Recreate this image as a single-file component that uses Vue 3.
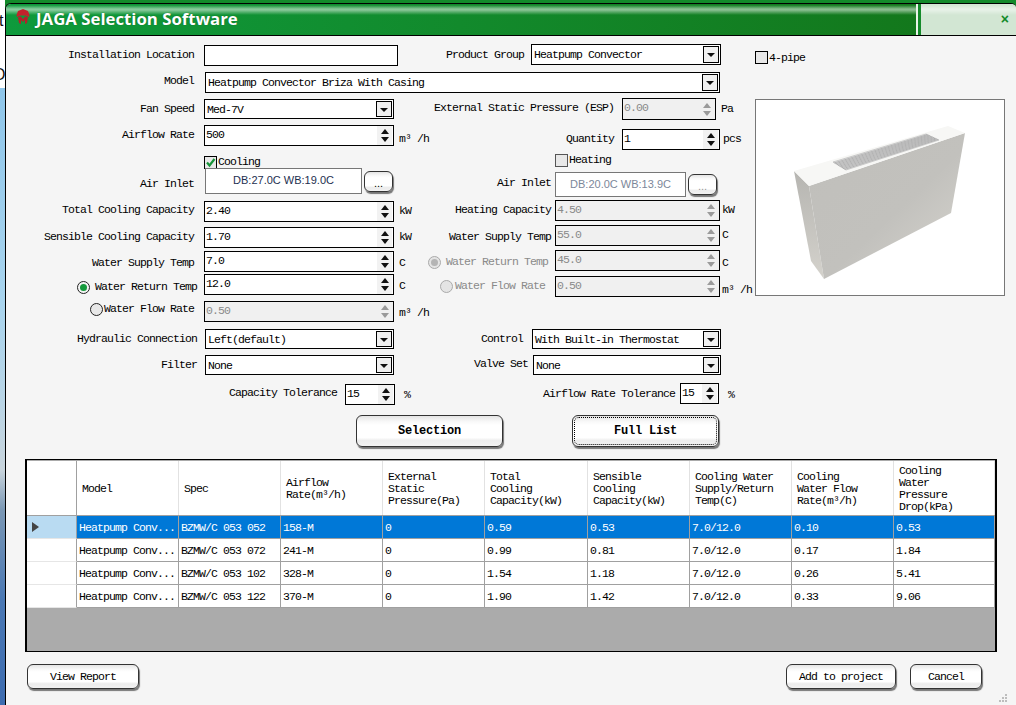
<script setup>
const headers = [
  ['Model'], ['Spec'], ['Airflow', 'Rate(m³/h)'], ['External', 'Static', 'Pressure(Pa)'],
  ['Total', 'Cooling', 'Capacity(kW)'], ['Sensible', 'Cooling', 'Capacity(kW)'],
  ['Cooling Water', 'Supply/Return', 'Temp(C)'], ['Cooling', 'Water Flow', 'Rate(m³/h)'],
  ['Cooling', 'Water', 'Pressure', 'Drop(kPa)']
]
const rows = [
  ['Heatpump Conv...', 'BZMW/C 053 052', '158-M', '0', '0.59', '0.53', '7.0/12.0', '0.10', '0.53'],
  ['Heatpump Conv...', 'BZMW/C 053 072', '241-M', '0', '0.99', '0.81', '7.0/12.0', '0.17', '1.84'],
  ['Heatpump Conv...', 'BZMW/C 053 102', '328-M', '0', '1.54', '1.18', '7.0/12.0', '0.26', '5.41'],
  ['Heatpump Conv...', 'BZMW/C 053 122', '370-M', '0', '1.90', '1.42', '7.0/12.0', '0.33', '9.06']
]
const grill = Array.from({ length: 9 }, (_, i) => i)
</script>

<template>
  <div class="screen">
    <div class="strip"><span class="frag t">t</span><span class="frag o">O</span></div>
    <div class="main">
      <div class="topline"></div>
      <div class="window">
        <header class="title">
          <div class="title-left">
            <svg class="logo" viewBox="0 0 14 16" width="14" height="16">
              <path d="M7 0 L12 2 L13.5 6 L13 8 L9.5 6.5 L4.500 6.500 L1 8 L.5 6 L2 2 Z" fill="#c3222c" />
              <path d="M2 8 L5 7.500 L7 10 L9 7.500 L12 8 L11 14 L9 15 L9 11 L7 13 L5 11 L5 15 L3 14 Z" fill="#b51f2a" />
            </svg>
            <span class="title-text">JAGA Selection Software</span>
          </div>
          <div class="title-sep"></div>
          <div class="title-right"><span class="close">×</span></div>
        </header>

        <div class="upper">
          <div class="fields">
            <div class="row h27">
              <span class="lab">Installation Location</span>
              <div class="input w194 h21"></div>
              <span class="lab pg">Product Group</span>
              <div class="sel w190 h21 up1">Heatpump Convector<span class="drop"></span></div>
            </div>
            <div class="row h27">
              <span class="lab lab-m">Model</span>
              <div class="sel w515 h21">Heatpump Convector Briza With Casing<span class="drop"></span></div>
            </div>

            <div class="cols">
              <div class="col-left">
                <div class="row" style="height:26px">
                  <span class="lab">Fan Speed</span>
                  <div class="sel w190 h20">Med-7V<span class="drop"></span></div>
                </div>
                <div class="row" style="height:30px">
                  <span class="lab">Airflow Rate</span>
                  <div class="input w190 h21">500<span class="spin"><i class="au"></i><i class="ad"></i></span></div>
                  <span class="unit d4">m³ /h</span>
                </div>
                <div class="row" style="height:13px">
                  <label class="chk-wrap cool"><span class="chk on"><svg viewBox="0 0 11 11" width="11" height="11"><path d="M2 5.500 L4.500 8.500 L9.500 2" fill="none" stroke="#18953a" stroke-width="2.200" /></svg></span>Cooling</label>
                </div>
                <div class="row" style="height:33px">
                  <span class="lab lab-inlet lab-s">Air Inlet</span>
                  <div class="inlet w157">DB:27.0C WB:19.0C</div>
                  <div class="btn dots">...</div>
                </div>
                <div class="row" style="height:26px">
                  <span class="lab m-1">Total Cooling Capacity</span>
                  <div class="input w190 h21">2.40<span class="spin"><i class="au"></i><i class="ad"></i></span></div>
                  <span class="unit">kW</span>
                </div>
                <div class="row" style="height:24px">
                  <span class="lab">Sensible Cooling Capacity</span>
                  <div class="input w190 h21">1.70<span class="spin"><i class="au"></i><i class="ad"></i></span></div>
                  <span class="unit">kW</span>
                </div>
                <div class="row" style="height:23px">
                  <span class="lab d2">Water Supply Temp</span>
                  <div class="input w190 h21">7.0<span class="spin"><i class="au"></i><i class="ad"></i></span></div>
                  <span class="unit d2">C</span>
                </div>
                <div class="row" style="height:27px">
                  <span class="lab lab-wr d3"><span class="radio on"></span>Water Return Temp</span>
                  <div class="input w190 h21">12.0<span class="spin"><i class="au"></i><i class="ad"></i></span></div>
                  <span class="unit d2">C</span>
                </div>
                <div class="row" style="height:28px">
                  <span class="lab lab-wf m-2"><span class="radio"></span>Water Flow Rate</span>
                  <div class="input w190 h21 off">0.50<span class="spin"><i class="au"></i><i class="ad"></i></span></div>
                  <span class="unit d2">m³ /h</span>
                </div>
              </div>

              <div class="col-right">
                <div class="row" style="height:31px">
                  <span class="lab2 wide">External Static Pressure (ESP)</span>
                  <div class="input off w94 h22">0.00<span class="spin"><i class="au"></i><i class="ad"></i></span></div>
                  <span class="unit d1">Pa</span>
                </div>
                <div class="row" style="height:24px">
                  <span class="lab2 wide">Quantity</span>
                  <div class="input w98 h21">1<span class="spin"><i class="au"></i><i class="ad"></i></span></div>
                  <span class="unit u3">pcs</span>
                </div>
                <div class="row" style="height:19px">
                  <label class="chk-wrap heat"><span class="chk dim"></span>Heating</label>
                </div>
                <div class="row" style="height:28px">
                  <span class="lab2 d1">Air Inlet</span>
                  <div class="inlet w131 h25 dimtext">DB:20.0C WB:13.9C</div>
                  <div class="btn dots dots-r dimtext">...</div>
                </div>
                <div class="row" style="height:25px">
                  <span class="lab2">Heating Capacity</span>
                  <div class="input off w165 h21">4.50<span class="spin"><i class="au"></i><i class="ad"></i></span></div>
                  <span class="unit u2">kW</span>
                </div>
                <div class="row" style="height:25px">
                  <span class="lab2 d2">Water Supply Temp</span>
                  <div class="input off w165 h21">55.0<span class="spin"><i class="au"></i><i class="ad"></i></span></div>
                  <span class="unit u2">C</span>
                </div>
                <div class="row" style="height:26px">
                  <span class="lab2 graylab lab-rr d2"><span class="radio on dis"></span>Water Return Temp</span>
                  <div class="input off w165 h21">45.0<span class="spin"><i class="au"></i><i class="ad"></i></span></div>
                  <span class="unit u2 d3">C</span>
                </div>
                <div class="row" style="height:21px">
                  <span class="lab2 graylab lab-rf"><span class="radio dis"></span>Water Flow Rate</span>
                  <div class="input off w165 h21">0.50<span class="spin"><i class="au"></i><i class="ad"></i></span></div>
                  <span class="unit u2 d4">m³ /h</span>
                </div>
              </div>
            </div>
          </div>

          <aside class="side">
            <label class="chk-wrap pipe"><span class="chk"></span>4-pipe</label>
            <div class="photo">
              <svg viewBox="755 99 248 195" width="248" height="195">
                <defs>
                  <linearGradient id="front" x1="0" y1="0" x2="1" y2="1">
                    <stop offset="0" stop-color="#c0bfbb" />
                    <stop offset=".55" stop-color="#c2c1bd" />
                    <stop offset="1" stop-color="#d8d6d0" />
                  </linearGradient>
                  <linearGradient id="sidef" x1="0" y1="0" x2="0" y2="1">
                    <stop offset="0" stop-color="#b6b5b1" />
                    <stop offset="1" stop-color="#d4d2cc" />
                  </linearGradient>
                </defs>
                <path d="M793 170 L808 185 L823 278 L810 260 Z" fill="url(#sidef)" />
                <path d="M808 185 L964 132 L950 212 L823 278 Z" fill="url(#front)" />
                <path d="M793 170 L947 125 L964 132 L808 185 Z" fill="#f7f7f5" />
                <path d="M832 161 L925 133 L938 139 L845 169 Z" fill="#ececec" stroke="#a0a0a0" stroke-width=".5" />
                <path v-for="i in grill" :key="i" :d="`M${833.300 + i * 1.300} ${161.900 + i * 0.800} L${926.300 + i * 1.300} ${133.700 + i * 0.600}`" stroke="#8c8c8c" stroke-width=".6" />
              </svg>
            </div>
          </aside>
        </div>

        <div class="lower">
          <div class="row" style="height:26px">
            <span class="lab lab-h">Hydraulic Connection</span>
            <div class="sel w189 h20">Left(default)<span class="drop"></span></div>
            <span class="lab ctl">Control</span>
            <div class="sel w189 h20">With Built-in Thermostat<span class="drop"></span></div>
          </div>
          <div class="row" style="height:29px">
            <span class="lab lab-h">Filter</span>
            <div class="sel w189 h20">None<span class="drop"></span></div>
            <span class="lab valve">Valve Set</span>
            <div class="sel w188 h20">None<span class="drop"></span></div>
          </div>
          <div class="row" style="height:31px">
            <span class="lab tol1">Capacity Tolerance</span>
            <div class="input w50 h21">15<span class="spin"><i class="au"></i><i class="ad"></i></span></div>
            <span class="unit pct">%</span>
            <span class="lab tol2">Airflow Rate Tolerance</span>
            <div class="input w39 h21 up1">15<span class="spin"><i class="au"></i><i class="ad"></i></span></div>
            <span class="unit pct">%</span>
          </div>
          <div class="actions">
            <div class="btn big">Selection</div>
            <div class="btn big focus"><span>Full List</span></div>
          </div>
        </div>

        <div class="grid">
          <div class="grid-head">
            <div class="corner"></div>
            <div v-for="(h, i) in headers" :key="i" class="hcell">
              <div><div v-for="l in h" :key="l">{{ l }}</div></div>
            </div>
          </div>
          <div v-for="(r, ri) in rows" :key="ri" class="grid-row" :class="{ selected: ri === 0 }">
            <div class="rowhead"><span v-if="ri === 0" class="pointer"></span></div>
            <div v-for="(c, ci) in r" :key="ci" class="cell">{{ c }}</div>
          </div>
        </div>

        <footer class="foot">
          <div class="btn small report">View Report</div>
          <div class="btn small add">Add to project</div>
          <div class="btn small cancel">Cancel</div>
        </footer>
        <div class="grip"><i></i><i></i><i></i><i></i><i></i><i></i></div>
      </div>
    </div>
  </div>
</template>

<style>
html, body { margin: 0; padding: 0; overflow: hidden; }
</style>

<style scoped>
.screen {
  width: 1016px; height: 705px; display: flex; overflow: hidden;
  font: 11.5px/12px "Liberation Mono", "DejaVu Sans Mono", monospace;
  letter-spacing: -.9px; color: #000;
}
.strip {
  width: 5px; flex: none; position: relative; overflow: hidden;
  background: linear-gradient(#fff 0, #fff 88px, #8fc6ea 88px, #a8d4ee 300px, #b9d5e6 400px, #c8d4dc 470px, #7a97b4 510px, #4a78b4 600px, #3d6cb0 705px);
}
.frag { position: absolute; font: 16px "Liberation Sans", sans-serif; color: #111; }
.frag.t { left: -1px; top: 12px; }
.frag.o { left: -7px; top: 66px; }
.main { flex: 1; display: flex; flex-direction: column; min-width: 0; background: #138a2a; }
.topline { height: 3px; flex: none; }
.window {
  flex: 1; position: relative; background: #f5f5f5; border-left: 1px solid #000; border-top: 1px solid #000;
  border-top-left-radius: 6px; border-top-right-radius: 5px; overflow: hidden;
}

.title { height: 31px; display: flex; border-bottom: 1px solid #000; }
.title-left {
  width: 910px; display: flex; align-items: center; padding-left: 9px; box-sizing: border-box; gap: 6px;
  background:
    linear-gradient(rgba(255,255,255,0) 1px, rgba(255,255,255,.5) 5px, rgba(255,255,255,.5) 6px, rgba(255,255,255,0) 11px),
    linear-gradient(90deg, #0e9a3c, #128a2c 50%, #13781c);
}
.logo { margin-top: -6px; margin-left: 1px; }
.title-text {
  font: 700 16.800px/20px "Open Sans", "Liberation Sans", sans-serif; letter-spacing: 0; color: #fff;
  margin-top: -1px; text-shadow: 0 0 1px #0b5a1e;
}
.title-sep { width: 5px; background: linear-gradient(90deg, #e8f2e8 0 2px, #148a2a 2px); }
.title-right {
  flex: 1; display: flex; align-items: center; justify-content: flex-end; padding-right: 7px;
  background:
    linear-gradient(rgba(255,255,255,0) 1px, rgba(255,255,255,.45) 5px, rgba(255,255,255,.45) 6px, rgba(255,255,255,0) 11px),
    #d2e6d3;
}
.close { font: 700 14px/14px "Liberation Sans", sans-serif; letter-spacing: 0; color: #138a2a; margin-top: -2px; }

.upper { display: flex; padding-top: 9px; }
.fields { width: 744px; flex: none; }
.side { flex: 1; padding-left: 5px; display: flex; flex-direction: column; }
.row { display: flex; align-items: flex-start; flex: none; }
.h27 { height: 27px; }
.cols { display: flex; }
.col-left { width: 418px; flex: none; }
.col-right { flex: 1; margin-top: -1px; }

.lab { width: 188px; margin-right: 10px; text-align: right; line-height: 20px; flex: none; white-space: nowrap; box-sizing: border-box; }
.lab-m { margin-right: 11px; margin-top: -1px; }
.lab-wr { width: 191px; margin-right: 7px; display: flex; justify-content: flex-end; align-items: center; gap: 5px; }
.lab-wf { display: flex; justify-content: flex-end; align-items: center; gap: 1px; }
.lab-inlet { margin-top: 6px; }
.lab-s { margin-right: 11px; }
.lab-h { width: 191px; margin-right: 8px; }
.pg { width: 126px; margin-right: 7px; }
.ctl { width: 129px; margin-right: 9px; }
.valve { width: 134px; margin-right: 5px; margin-top: -1px; }
.tol1 { width: 331px; margin-right: 8px; margin-top: -1px; }
.tol2 { width: 271px; margin-right: 5px; }
.m-1 { margin-top: -1px; }
.m-2 { margin-top: -2px; }
.d1 { margin-top: 1px; }
.d2 { margin-top: 2px; }
.d3 { margin-top: 3px; }
.d4 { margin-top: 4px; }

.lab2 { width: 127px; margin-right: 4px; text-align: right; line-height: 20px; flex: none; white-space: nowrap; }
.lab2.wide { width: 190px; margin-right: 8px; }
.graylab { color: #8a8a8a; display: flex; justify-content: flex-end; align-items: center; }
.lab-rr { width: 124px; margin-right: 7px; gap: 5px; }
.lab-rf { width: 121px; margin-right: 10px; gap: 2px; }

.input, .sel {
  position: relative; box-sizing: border-box; border: 1px solid #000; background: #fff; flex: none;
  padding-left: 1px; line-height: 17px; white-space: nowrap;
}
.sel { line-height: 19px; padding-left: 2px; }
.off { background: #f0f0f0; color: #8a8a8a; }
.up1 { margin-top: -1px; }
.w39 { width: 39px; } .w50 { width: 50px; } .w94 { width: 94px; } .w98 { width: 98px; }
.w131 { width: 131px; } .w157 { width: 157px; } .w165 { width: 165px; } .w188 { width: 188px; }
.w189 { width: 189px; } .w190 { width: 190px; } .w194 { width: 194px; } .w515 { width: 515px; }
.h20 { height: 20px; } .h21 { height: 21px; } .h22 { height: 22px; } .h25 { height: 25px !important; }

.spin {
  position: absolute; right: 1px; top: 0; bottom: 0; width: 15px; background: #f2f2f2;
  display: flex; flex-direction: column; align-items: center; justify-content: center; gap: 3px;
}
.off .spin { background: #f0f0f0; }
.au, .ad { display: block; width: 0; height: 0; border-left: 4px solid transparent; border-right: 4px solid transparent; }
.au { border-bottom: 5px solid #111; }
.ad { border-top: 5px solid #111; }
.off .au { border-bottom-color: #9a9a9a; }
.off .ad { border-top-color: #9a9a9a; }

.drop {
  position: absolute; right: 1px; top: 1px; bottom: 1px; width: 16px; box-sizing: border-box;
  border: 1px solid #000; background: #f0f0f0; display: flex; align-items: center; justify-content: center;
}
.drop::after {
  content: ""; width: 0; height: 0; border-left: 4px solid transparent; border-right: 4px solid transparent;
  border-top: 4px solid #111; margin-top: 1px;
}

.unit { margin-left: 5px; line-height: 20px; white-space: nowrap; }
.u2 { margin-left: 2px; }
.u3 { margin-left: 3px; }
.pct { margin-left: 9px; margin-top: 1px; width: 0; }

.chk-wrap { display: flex; align-items: center; gap: 1px; line-height: 14px; white-space: nowrap; }
.cool { margin-left: 198px; }
.heat { margin-left: 131px; }
.pipe { margin-top: 6px; height: 13px; }
.chk {
  width: 13px; height: 13px; box-sizing: border-box; border: 1px solid #000; background: #e8e8e8; flex: none;
  display: flex; align-items: center; justify-content: center;
}
.chk.dim { border-color: #555; }
.chk svg { display: block; }

.radio {
  width: 13px; height: 13px; box-sizing: border-box; border: 1px solid #222; border-radius: 50%; background: #e8e8e8;
  flex: none; display: flex; align-items: center; justify-content: center;
}
.radio.on { background: #f4f4f4; }
.radio.on::after { content: ""; width: 7px; height: 7px; border-radius: 50%; background: #159a3c; }
.radio.dis { border-color: #aaa; background: #e4e4e4; }
.radio.on.dis::after { background: #b4b4b4; }

.inlet {
  height: 26px; box-sizing: border-box; border: 1px solid #777; background: #fff; flex: none;
  font: 11px/23px "Liberation Sans", sans-serif; letter-spacing: 0; color: #1d2f4f; text-align: center;
}
.dimtext { color: #7c879a; }
.btn {
  box-sizing: border-box; border: 1px solid #333; border-radius: 6px; flex: none; text-align: center;
  background: linear-gradient(#e4e4e4 0, #f8f8f8 18%, #fff 30%, #fff 72%, #ececec 82%, #f2f2f2 100%);
  box-shadow: 1px 2px 1px #777;
}
.dots { width: 29px; height: 21px; margin-left: 2px; margin-top: 3px; font: 11px/22px "Liberation Sans", sans-serif; letter-spacing: 0; }
.dots-r { margin-top: 2px; }
.dimtext.dots { color: #999; }

.lower { padding-top: 0; }
.actions { display: flex; height: 44px; padding-left: 350px; gap: 69px; }
.big { width: 147px; height: 32px; font-weight: 700; font-size: 12px; line-height: 31px; letter-spacing: -.2px; }
.focus { padding: 1px; }
.focus span { display: block; height: 100%; border: 1px dotted #000; border-radius: 5px; box-sizing: border-box; line-height: 27px; }

.grid {
  margin-left: 19px; width: 972px; height: 193px; box-sizing: border-box; flex: none;
  border: 1px solid #000; border-width: 1px 2px 1px 2px; background: #ababab; padding-top: 1px;
}
.grid-head, .grid-row { display: grid; grid-template-columns: 50px 102px 102px 102px 102px 103px 102px 102px 102px 101px; }
.grid-head { height: 55px; background: #fff; border-bottom: 1px solid #a0a0a0; box-sizing: border-box; }
.corner { border-right: 1px solid #a0a0a0; }
.hcell { border-right: 1px solid #e2e2e2; display: flex; align-items: center; padding: 1px 0 0 5px; line-height: 12px; }
.grid-row { height: 23px; background: #fff; border-bottom: 1px solid #a0a0a0; box-sizing: border-box; line-height: 23px; }
.grid-row.selected { background: #0078d7; color: #fff; }
.rowhead { border-right: 1px solid #a0a0a0; position: relative; border-bottom: 1px solid #e6e6e6; margin-bottom: -1px; background: #fff; }
.selected .rowhead { background: #b9dbf2; }
.pointer {
  position: absolute; left: 5px; top: 6px; width: 0; height: 0;
  border-left: 7px solid #444; border-top: 5px solid transparent; border-bottom: 5px solid transparent;
}
.cell { border-right: 1px solid #a0a0a0; padding-left: 2px; white-space: nowrap; overflow: hidden; }

.foot { display: flex; padding: 12px 34px 0 21px; }
.small { height: 25px; line-height: 24px; }
.report { width: 112px; }
.add { width: 110px; margin-left: auto; margin-right: 14px; }
.cancel { width: 72px; }

.grip { position: absolute; right: 8px; bottom: 2px; width: 9px; height: 9px; display: grid; grid-template-columns: repeat(3, 2px); grid-template-rows: repeat(3, 2px); gap: 1px; }
.grip i { background: #bdbdbd; }
.grip i:nth-child(1) { grid-column: 3; grid-row: 1; }
.grip i:nth-child(2) { grid-column: 2; grid-row: 2; }
.grip i:nth-child(3) { grid-column: 3; grid-row: 2; }
.grip i:nth-child(4) { grid-column: 1; grid-row: 3; }
.grip i:nth-child(5) { grid-column: 2; grid-row: 3; }
.grip i:nth-child(6) { grid-column: 3; grid-row: 3; }

.photo {
  width: 250px; height: 197px; margin-top: 35px; box-sizing: border-box; border: 1px solid #777; background: #fff;
}
.photo svg { display: block; }
</style>
